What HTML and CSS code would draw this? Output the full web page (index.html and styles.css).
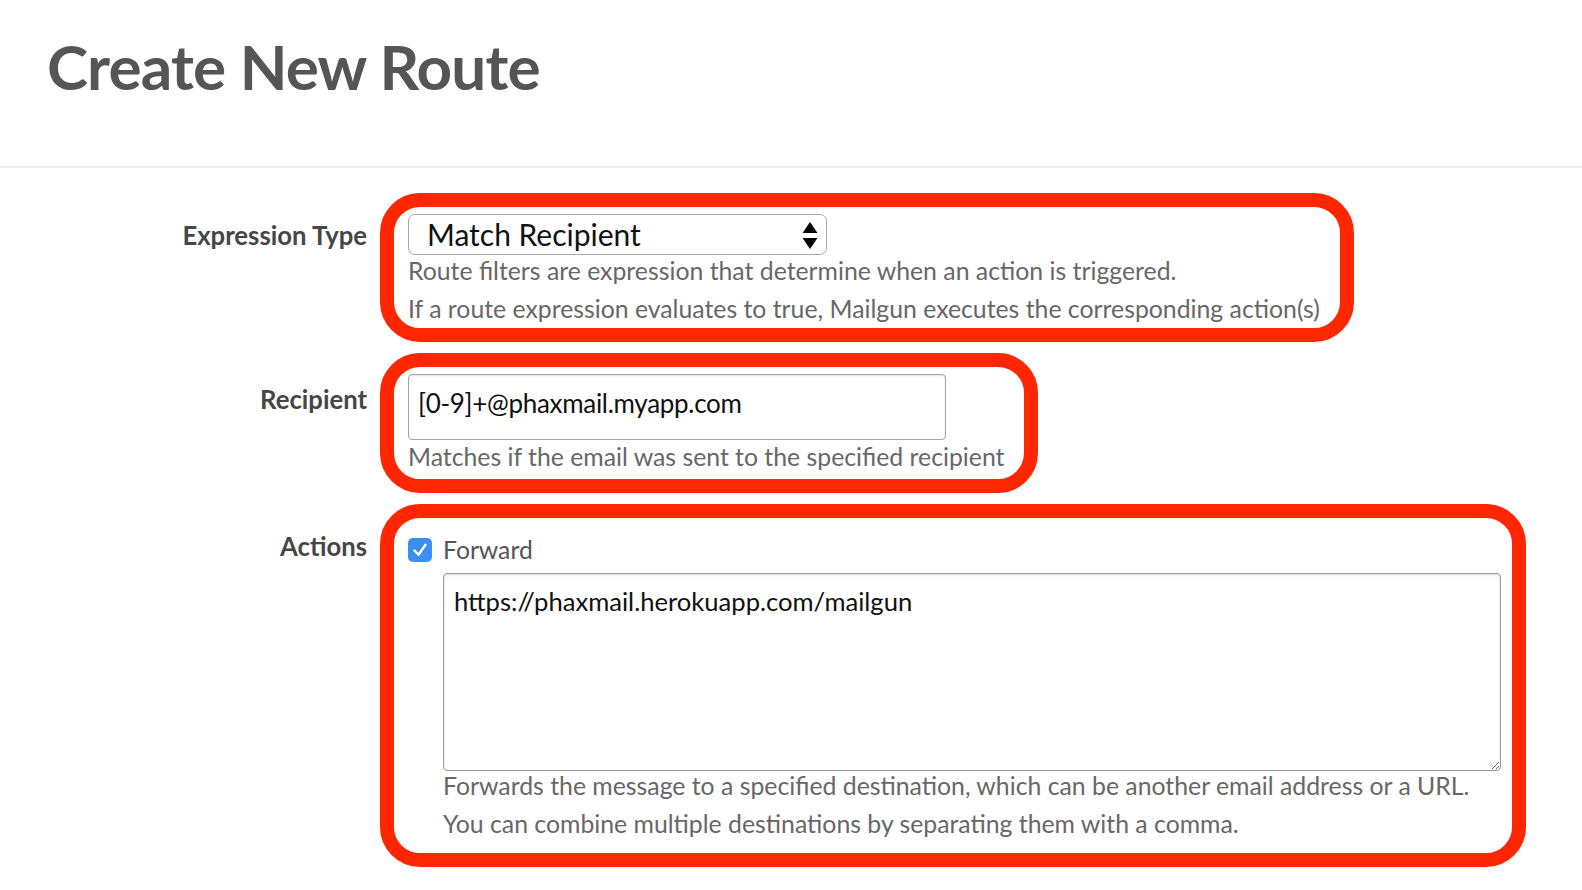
FILE: index.html
```html
<!DOCTYPE html>
<html lang="en">
<head>
<meta charset="utf-8">
<title>Create New Route</title>
<link rel="stylesheet" href="styles.css">
</head>
<body>
<header class="page-header">
  <h1 class="page-title">Create New Route</h1>
</header>
<form class="route-form">
  <div class="form-row">
    <div class="row-label">Expression Type</div>
    <div class="callout callout-expr">
      <div class="fake-select">
        <span class="fake-select-text">Match Recipient</span>
        <svg class="fake-select-arrows" width="16" height="28" viewBox="0 0 16 28" aria-hidden="true">
          <path d="M8 0 L15.5 11 L0.5 11 Z" fill="#000"/>
          <path d="M0.5 16 L15.5 16 L8 27 Z" fill="#000"/>
        </svg>
      </div>
      <p class="help help-first">Route filters are expression that determine when an action is triggered.</p>
      <p class="help">If a route expression evaluates to true, Mailgun executes the corresponding action(s)</p>
    </div>
  </div>

  <div class="form-row">
    <div class="row-label row-label-recipient">Recipient</div>
    <div class="callout callout-recipient">
      <div class="text-input">[0-9]+@phaxmail.myapp.com</div>
      <p class="help help-first help-input">Matches if the email was sent to the specified recipient</p>
    </div>
  </div>

  <div class="form-row">
    <div class="row-label">Actions</div>
    <div class="callout callout-actions">
      <div class="check-row">
        <span class="check-box">
          <svg width="24" height="24" viewBox="0 0 24 24" aria-hidden="true">
            <path d="M6.5 12.5 L10.5 16.8 L17.5 6.8" fill="none" stroke="#fff" stroke-width="2.4" stroke-linecap="round" stroke-linejoin="round"/>
          </svg>
        </span>
        <span class="check-label">Forward</span>
      </div>
      <div class="action-body">
        <textarea class="text-area" readonly>https://phaxmail.herokuapp.com/mailgun</textarea>
        <p class="help help-first help-area">Forwards the message to a specified destination, which can be another email address or a URL.</p>
        <p class="help">You can combine multiple destinations by separating them with a comma.</p>
      </div>
    </div>
  </div>
</form>
</body>
</html>
```

FILE: styles.css
```css
* {
  box-sizing: border-box;
}

html, body {
  margin: 0;
  padding: 0;
  background: #ffffff;
}

body {
  font-family: Lato, "Open Sans", "Liberation Sans", sans-serif;
  color: #555555;
}

.page-header {
  padding: 35px 0 69px 47px;
  border-bottom: 2px solid #eeeeee;
}

.page-title {
  margin: 0;
  font-size: 62px;
  line-height: 62px;
  font-weight: 700;
  color: #555555;
  letter-spacing: -0.8px;
}

.route-form {
  padding-top: 25px;
  display: flex;
  flex-direction: column;
  gap: 11px;
}

.form-row {
  display: flex;
  align-items: flex-start;
  gap: 13px;
}

.row-label {
  width: 367px;
  flex: none;
  text-align: right;
  font-size: 25.7px;
  line-height: 30px;
  font-weight: 700;
  color: #464646;
  padding-top: 27px;
}

.row-label-recipient {
  padding-top: 31px;
}

.callout {
  flex: none;
  border: 14px solid #ff2600;
  border-radius: 40px;
}

.callout-expr {
  padding: 7px 20px 0 14px;
}

.callout-recipient {
  padding: 7px 20px 3px 14px;
}

.callout-actions {
  padding: 13px 11px 10px 14px;
}

.help {
  margin: 0;
  font-size: 24.8px;
  line-height: 38px;
  color: #676767;
  white-space: nowrap;
}

.help-first {
  margin-top: -3px;
}

.help-input {
  margin-top: -2px;
}

.help-area {
  margin-top: -4px;
}

.fake-select {
  width: 419px;
  height: 41px;
  border: 1px solid #a9a9a9;
  border-radius: 7px;
  display: flex;
  align-items: center;
  justify-content: space-between;
  padding: 0 8px 0 18px;
  background: #ffffff;
}

.fake-select-text {
  font-size: 30px;
  color: #111111;
  line-height: 41px;
}

.fake-select-arrows {
  display: block;
  margin-top: 2px;
}

.text-input {
  width: 538px;
  height: 66px;
  border: 1px solid #a5a5a5;
  border-radius: 4px;
  box-shadow: inset 0 1px 2px rgba(0, 0, 0, 0.12);
  padding: 0 0 0 9px;
  font-size: 26px;
  line-height: 56px;
  color: #111111;
  letter-spacing: -0.3px;
}

.check-row {
  display: flex;
  align-items: center;
  gap: 11px;
  height: 38px;
}

.check-box {
  width: 24px;
  height: 24px;
  border-radius: 5px;
  background: #3a8ff0;
  display: flex;
  flex: none;
}

.check-label {
  font-size: 24.7px;
  line-height: 38px;
  color: #555555;
}

.action-body {
  margin-left: 35px;
  padding-top: 4px;
}

.text-area {
  display: block;
  width: 1058px;
  height: 198px;
  margin: 0;
  border: 1px solid #9a9a9a;
  border-radius: 4px;
  box-shadow: inset 0 1px 3px rgba(0, 0, 0, 0.15);
  padding: 12px 10px 9px;
  font-family: Lato, "Open Sans", "Liberation Sans", sans-serif;
  font-size: 25.6px;
  line-height: 30px;
  color: #111111;
  resize: both;
  outline: none;
}
```
